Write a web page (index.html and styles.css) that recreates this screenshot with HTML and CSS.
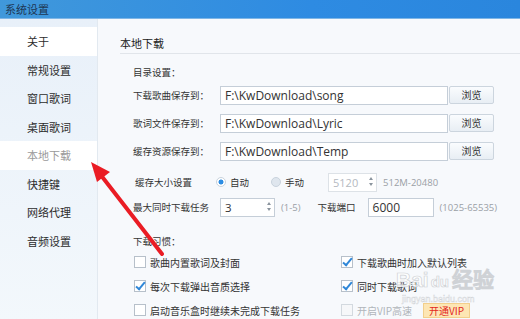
FILE: index.html
```html
<!DOCTYPE html>
<html lang="zh-CN">
<head>
    <meta charset="UTF-8">
    <title>系统设置</title>
    <link rel="stylesheet" href="styles.css">
</head>
<body>
<div class="window">
    <div class="titlebar">系统设置</div>
    <div class="main">
        <ul class="sidebar">
            <li class="lit">关于</li>
            <li>常规设置</li>
            <li>窗口歌词</li>
            <li>桌面歌词</li>
            <li class="lit current">本地下载</li>
            <li>快捷键</li>
            <li>网络代理</li>
            <li>音频设置</li>
        </ul>
        <div class="content">
            <div class="heading">本地下载</div>
            <div class="form">
                <div class="group-title">目录设置：</div>
                <div class="path-row">
                    <span class="label">下载歌曲保存到：</span>
                    <span class="path">F:\KwDownload\song</span>
                    <span class="browse">浏览</span>
                </div>
                <div class="path-row">
                    <span class="label">歌词文件保存到：</span>
                    <span class="path">F:\KwDownload\Lyric</span>
                    <span class="browse">浏览</span>
                </div>
                <div class="path-row">
                    <span class="label">缓存资源保存到：</span>
                    <span class="path">F:\KwDownload\Temp</span>
                    <span class="browse">浏览</span>
                </div>
                <div class="line cache">
                    <span class="label short">缓存大小设置</span>
                    <span class="radio checked"></span><span>自动</span>
                    <span class="radio off"></span><span>手动</span>
                    <span class="spin disabled">5120<i class="arrows"><b class="up"></b><b class="down"></b></i></span>
                    <span class="hint">512M-20480</span>
                </div>
                <div class="line tasks">
                    <span class="label">最大同时下载任务</span>
                    <span class="spin count">3<i class="arrows"><b class="up"></b><b class="down"></b></i></span>
                    <span class="hint">(1-5)</span>
                    <span class="port-label">下载端口</span>
                    <span class="spin port">6000</span>
                    <span class="hint">(1025-65535)</span>
                </div>
                <div class="group-title habit">下载习惯：</div>
                <div class="checks">
                    <div class="check"><span class="box"></span>歌曲内置歌词及封面</div>
                    <div class="check"><span class="box on"></span>下载歌曲时加入默认列表</div>
                    <div class="check"><span class="box on"></span>每次下载弹出音质选择</div>
                    <div class="check"><span class="box on"></span>同时下载歌词</div>
                    <div class="check"><span class="box"></span>启动音乐盒时继续未完成下载任务</div>
                    <div class="check disabled"><span class="box"></span>开启VIP高速<span class="vip">开通VIP</span></div>
                </div>
            </div>
        </div>
    </div>

    <svg class="arrow" width="520" height="319" viewBox="0 0 520 319">
        <line x1="162" y1="254" x2="100" y2="174" stroke="#ea1c24" stroke-width="4" stroke-linecap="round"/>
        <polygon points="91,162 110,172 97,182" fill="#ea1c24"/>
    </svg>

    <div class="watermark">
        <div class="wm-logo">Bai<span class="paw">du</span>经验</div>
        <div class="wm-url">jingyan.baidu.com</div>
    </div>
</div>
</body>
</html>
```

FILE: styles.css
```css
html, body {
    margin: 0;
    padding: 0;
}

body {
    width: 520px;
    height: 319px;
    overflow: hidden;
    font-family: "Noto Sans CJK SC", "Noto Sans", sans-serif;
    color: #333;
}

ul {
    margin: 0;
    padding: 0;
    list-style: none;
}

.window {
    position: relative;
    width: 520px;
    height: 319px;
    display: flex;
    flex-direction: column;
}

.titlebar {
    height: 19px;
    line-height: 18px;
    padding-left: 5px;
    font-size: 11px;
    color: #1d3653;
    background: linear-gradient(to right, #4098db, #2e8be2 60%, #2a86dd);
    border-bottom: 1px solid #7fb6e6;
}

.main {
    flex: 1;
    display: flex;
}

.sidebar {
    width: 97px;
    padding-top: 8px;
    background: linear-gradient(to bottom, #e8f0f9, #f3f8fc);
    border-right: 1px solid #e2e9f0;
}

.sidebar li {
    height: 28.5px;
    line-height: 28.5px;
    padding-left: 27px;
    font-size: 11px;
    color: #2c2c2c;
}

.sidebar .lit {
    background: #fff;
}

.sidebar .current {
    color: #9a9a9a;
}

.content {
    flex: 1;
    padding: 14px 0 0 22px;
    background: #f7f9fc;
}

.heading {
    height: 20px;
    line-height: 20px;
    font-size: 11px;
    color: #222;
    border-bottom: 1px solid #e1e5ea;
}

.form {
    padding-left: 13px;
    font-size: 9.5px;
}

.group-title {
    height: 18px;
    line-height: 18px;
    margin-top: 9px;
}

.path-row {
    height: 28px;
    display: flex;
    align-items: center;
}

.label {
    width: 87px;
    flex: none;
    white-space: nowrap;
}

.label.short {
    width: 81px;
    padding-left: 2px;
}

.path {
    width: 222px;
    height: 17px;
    line-height: 17px;
    padding-left: 4px;
    background: #fff;
    border: 1px solid #c5ced8;
    font-family: "Open Sans", "Noto Sans", sans-serif;
    font-size: 12px;
    color: #333;
}

.browse {
    width: 43px;
    height: 16px;
    line-height: 16px;
    margin-left: 1px;
    text-align: center;
    font-size: 10px;
    color: #333;
    background: linear-gradient(to bottom, #fafcfe, #e8eef4);
    border: 1px solid #ccd5de;
    border-radius: 2px;
}

.line {
    height: 20px;
    display: flex;
    align-items: center;
    white-space: nowrap;
}

.cache {
    margin-top: 7px;
}

.tasks {
    margin-top: 5px;
}

.radio {
    width: 8px;
    height: 8px;
    margin-right: 4px;
    border: 1px solid #c9d3dd;
    border-radius: 50%;
    background: #f4f7fa;
    position: relative;
}

.radio.checked {
    background: radial-gradient(circle, #2d8de3 0 2.2px, #ffffff 2.8px);
}

.radio.off {
    margin-left: 22px;
    background: #dfe6ee;
}

.spin {
    position: relative;
    height: 17px;
    line-height: 17px;
    padding-left: 4px;
    background: #fff;
    border: 1px solid #c5ced8;
    font-family: "Open Sans", "Noto Sans", sans-serif;
    font-size: 11.5px;
    color: #333;
}

.spin.disabled {
    width: 43px;
    margin-left: 24px;
    color: #b4b9bf;
    border-color: #dde2e7;
    font-size: 11px;
}

.spin.count {
    width: 49px;
}

.spin.port {
    width: 60px;
    margin-left: 12px;
    font-size: 12px;
}

.arrows {
    position: absolute;
    right: 3px;
    top: 3px;
    display: flex;
    flex-direction: column;
    gap: 3px;
}

.arrows b {
    width: 0;
    height: 0;
    border-left: 2.5px solid transparent;
    border-right: 2.5px solid transparent;
}

.arrows .up {
    border-bottom: 3px solid #8a949e;
}

.arrows .down {
    border-top: 3px solid #8a949e;
}

.hint {
    margin-left: 6px;
    font-family: "Open Sans", "Noto Sans", sans-serif;
    font-size: 9.5px;
    color: #9aa0a6;
}

.port-label {
    margin-left: 17px;
}

.habit {
    height: 20px;
    line-height: 20px;
    margin-top: 14px;
}

.checks {
    display: grid;
    grid-template-columns: 207px 1fr;
    grid-auto-rows: 24px;
    margin-top: -1px;
}

.check {
    display: flex;
    align-items: center;
    white-space: nowrap;
    font-size: 10px;
}

.box {
    position: relative;
    width: 10px;
    height: 10px;
    margin: 0 4px 0 1px;
    background: #fff;
    border: 1px solid #b7c0ca;
}

.box.on::after {
    content: "";
    position: absolute;
    left: 3px;
    top: -1px;
    width: 3px;
    height: 8px;
    border-right: 2px solid #2f87d8;
    border-bottom: 2px solid #2f87d8;
    transform: rotate(40deg);
}

.check.disabled {
    color: #b0b5ba;
}

.check.disabled .box {
    border-color: #d3d9df;
    background: #f6f7f9;
}

.vip {
    margin-left: 11px;
    padding: 0 5px;
    height: 13px;
    line-height: 13px;
    font-size: 10px;
    color: #e2261d;
    background: #fde6b4;
    border: 1px solid #f2cf8c;
}

.arrow {
    position: absolute;
    left: 0;
    top: 0;
    pointer-events: none;
}

.watermark {
    position: absolute;
    left: 396px;
    top: 268px;
    color: #fff;
    opacity: .85;
    pointer-events: none;
}

.wm-logo {
    font-family: "Liberation Sans", sans-serif;
    font-size: 21px;
    font-weight: bold;
    line-height: 24px;
    -webkit-text-stroke: .7px #c9ccd0;
}

.wm-logo .paw {
    font-size: 15px;
    margin: 0 3px 0 2px;
}

.wm-url {
    margin-left: 6px;
    font-family: "Liberation Sans", sans-serif;
    font-size: 9px;
    line-height: 10px;
    color: #fff;
    -webkit-text-stroke: .4px #c9ccd0;
}
```
